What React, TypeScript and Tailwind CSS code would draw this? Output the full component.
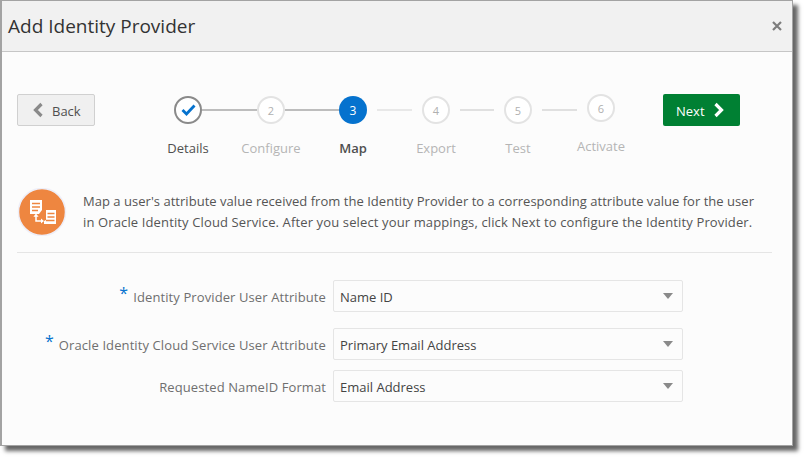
import { ReactNode } from "react";

const FONT = "font-['Open_Sans','Noto_Sans',sans-serif]";

function ChevronLeft({ className }: { className: string }) {
  return (
    <svg viewBox="0 0 12 16" className={className}>
      <path d="M9.5 2 3.5 8l6 6" fill="none" stroke="currentColor" strokeWidth="3.2" />
    </svg>
  );
}

function ChevronRight({ className }: { className: string }) {
  return (
    <svg viewBox="0 0 12 16" className={className}>
      <path d="M2.5 2l6 6-6 6" fill="none" stroke="currentColor" strokeWidth="3.2" />
    </svg>
  );
}

function MapIcon() {
  return (
    <svg viewBox="0 0 50 48" className="h-[48px] w-[50px]">
      <circle cx="25" cy="24" r="23.5" fill="#ee8640" stroke="#eeeef8" strokeWidth="1.5" />
      <path d="M13 12h12v10l-3 4h-9z" fill="#fff" />
      <path d="M15 15.5h8M15 19h8M15 22.5h6" stroke="#ee8640" strokeWidth="1.3" />
      <path d="M29 22h10v14H27v-3l2-1z" fill="#fff" />
      <path d="M30.5 25.5h7M30.5 29h7M29 32.5h8.5" stroke="#ee8640" strokeWidth="1.3" />
      <path d="M19 28v5h6" fill="none" stroke="#fff" strokeWidth="1.5" />
      <path d="M19 25.5l-2.6 3.2h5.2zM27 33l-3-2.5v5z" fill="#fff" />
    </svg>
  );
}

function Step({ label, circle, labelClass = "text-[#b5b5b5]", lifted = false }: { label: string; circle: ReactNode; labelClass?: string; lifted?: boolean }) {
  return (
    <div className={lifted ? "-mt-[2px] flex w-7 flex-col items-center" : "flex w-7 flex-col items-center"}>
      {circle}
      <span className={`mt-[14px] whitespace-nowrap text-[13px] leading-[20px] ${labelClass}`}>{label}</span>
    </div>
  );
}

function Todo({ n }: { n: number }) {
  return (
    <div className="flex h-7 w-7 items-center justify-center rounded-full border-2 border-[#e3e3e3] bg-white pt-[2px] text-[11px] text-[#b0b0b0]">
      {n}
    </div>
  );
}

function Line({ className }: { className: string }) {
  return <div className={`mt-[13px] h-[2px] ${className}`} />;
}

function SelectRow({ label, value, required = false, className = "" }: { label: string; value: string; required?: boolean; className?: string }) {
  return (
    <div className={`flex items-center ${className}`}>
      <div className="flex w-[324px] items-center justify-end text-[13px] tracking-[0.1px] text-[#6f6f6f]">
        {required && <span className="mr-[5px] -mt-[6px] text-[16px] leading-none text-[#0572ce]">*</span>}
        <span className="pt-[3px]">{label}</span>
      </div>
      <div className="ml-[7px] flex h-8 w-[350px] items-center justify-between rounded-[2px] border border-[#e5e5e5] bg-[#fcfcfc] pl-[6px] pr-[9px] text-[13px] text-[#444]">
        <span className="pt-[3px]">{value}</span>
        <div className="h-0 w-0 border-x-[5px] border-t-[6px] border-x-transparent border-t-[#8a8a8a]" />
      </div>
    </div>
  );
}

export default function App() {
  return (
    <div className={`h-[461px] w-[808px] bg-white ${FONT}`}>
      <div className="flex h-[446px] w-[793px] flex-col border border-l-2 border-[#a3a3a3] bg-[#fcfcfc] shadow-[5px_5px_4px_rgba(0,0,0,0.6)]">
        <div className="flex h-[51px] items-center justify-between border-b border-[#c6c6c6] bg-[#f1f1f1] pl-[6px] pr-[10px]">
          <span className="text-[19px] text-[#333]">Add Identity Provider</span>
          <svg viewBox="0 0 10 10" className="h-[10px] w-[10px] text-[#7d7d7d]">
            <path d="M1 1l8 8M9 1l-8 8" stroke="currentColor" strokeWidth="2.2" />
          </svg>
        </div>

        <div className="flex pl-[15px] pt-[42px]">
          <button className="flex h-8 w-[78px] items-center rounded-[2px] border border-[#d0d0d0] bg-[#f0f0f0] pl-[14px] text-[13px] text-[#4f4f4f]">
            <ChevronLeft className="mr-[8px] h-[16px] w-[12px] text-[#8a8a8a]" />
            <span className="pt-[3px]">Back</span>
          </button>

          <div className="ml-[79px] mt-[2px] flex items-start">
            <Step
              label="Details"
              labelClass="text-[#4f4f4f]"
              circle={
                <div className="flex h-7 w-7 items-center justify-center rounded-full border-2 border-[#8a8a8a] bg-white">
                  <svg viewBox="0 0 15 12" className="h-[12px] w-[15px]">
                    <path d="M1.5 6l4 4 8-8.5" fill="none" stroke="#0572ce" strokeWidth="2.8" />
                  </svg>
                </div>
              }
            />
            <Line className="w-[55px] bg-[#bdbdbd]" />
            <Step label="Configure" circle={<Todo n={2} />} />
            <Line className="w-[54px] bg-[#bdbdbd]" />
            <Step
              label="Map"
              labelClass="font-semibold text-[#4f4f4f]"
              circle={<div className="flex h-7 w-7 items-center justify-center rounded-full bg-[#0572ce] pt-[2px] text-[12px] text-white">3</div>}
            />
            <Line className="ml-[10px] mr-[10px] w-[35px] bg-[#e8e8e8]" />
            <Step label="Export" circle={<Todo n={4} />} />
            <Line className="ml-[10px] mr-[10px] w-[34px] bg-[#e0e0e0]" />
            <Step label="Test" circle={<Todo n={5} />} />
            <Line className="ml-[10px] mr-[10px] w-[35px] bg-[#e0e0e0]" />
            <Step label="Activate" circle={<Todo n={6} />} lifted />
          </div>

          <button className="ml-[48px] flex h-8 w-[77px] items-center rounded-[2px] bg-[#008033] pl-[13px] text-[13px] font-medium text-white">
            <span className="pt-[3px]">Next</span>
            <ChevronRight className="ml-[8px] h-[16px] w-[12px] text-white" />
          </button>
        </div>

        <div className="mx-[15px] mt-[30px] flex h-[65px] w-[755px] items-start border-b border-[#e5e5e5]">
          <MapIcon />
          <p className="ml-[16px] mt-[3px] whitespace-nowrap text-[13px] leading-[21px] text-[#555]">
            <span className="tracking-[0.03px]">Map a user's attribute value received from the Identity Provider to a corresponding attribute value for the user</span>
            <br />
            <span className="tracking-[0.13px]">in Oracle Identity Cloud Service. After you select your mappings, click Next to configure the Identity Provider.</span>
          </p>
        </div>

        <SelectRow className="mt-[27px]" required label="Identity Provider User Attribute" value="Name ID" />
        <SelectRow className="mt-4" required label="Oracle Identity Cloud Service User Attribute" value="Primary Email Address" />
        <SelectRow className="mt-[10px]" label="Requested NameID Format" value="Email Address" />
      </div>
    </div>
  );
}
